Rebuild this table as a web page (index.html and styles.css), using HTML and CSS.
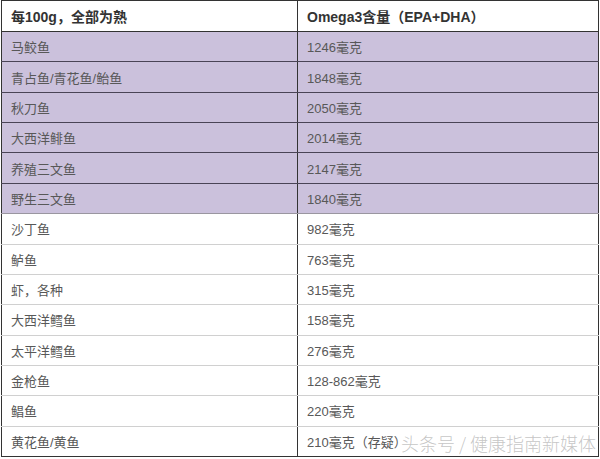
FILE: index.html
```html
<!DOCTYPE html>
<html lang="zh">
<head>
<meta charset="utf-8">
<link rel="stylesheet" href="styles.css">
</head>
<body>
<div class="wrap">
<table class="omega">
  <thead>
    <tr><th class="c1">每100g，全部为熟</th><th class="c2">Omega3含量（EPA+DHA）</th></tr>
  </thead>
  <tbody>
    <tr class="hl"><td>马鲛鱼</td><td>1246毫克</td></tr>
    <tr class="hl"><td>青占鱼/青花鱼/鲐鱼</td><td>1848毫克</td></tr>
    <tr class="hl"><td>秋刀鱼</td><td>2050毫克</td></tr>
    <tr class="hl"><td>大西洋鲱鱼</td><td>2014毫克</td></tr>
    <tr class="hl"><td>养殖三文鱼</td><td>2147毫克</td></tr>
    <tr class="hl last"><td>野生三文鱼</td><td>1840毫克</td></tr>
    <tr><td>沙丁鱼</td><td>982毫克</td></tr>
    <tr><td>鲈鱼</td><td>763毫克</td></tr>
    <tr><td>虾，各种</td><td>315毫克</td></tr>
    <tr><td>大西洋鳕鱼</td><td>158毫克</td></tr>
    <tr><td>太平洋鳕鱼</td><td>276毫克</td></tr>
    <tr><td>金枪鱼</td><td>128-862毫克</td></tr>
    <tr><td>鲳鱼</td><td>220毫克</td></tr>
    <tr class="end"><td>黄花鱼/黄鱼</td><td>210毫克（存疑）</td></tr>
  </tbody>
</table>
<div class="watermark">头条号 / 健康指南新媒体</div>
</div>
</body>
</html>
```

FILE: styles.css
```css
html, body {
  margin: 0;
  padding: 0;
  background: #ffffff;
}
.wrap {
  position: relative;
  width: 600px;
  height: 459px;
  overflow: hidden;
}
.omega {
  margin-left: 1px;
  width: 598px;
  border-collapse: collapse;
  font-family: "Liberation Sans", "Noto Sans CJK SC", sans-serif;
  font-size: 13px;
  color: #585858;
  table-layout: fixed;
}
.omega th, .omega td {
  text-align: left;
  padding: 0 0 0 9px;
  border-left: 1px solid #333333;
  border-right: 1px solid #333333;
  white-space: nowrap;
}
.omega .c1 { width: 286px; }
.omega th {
  height: 30px;
  font-size: 14px;
  font-weight: bold;
  color: #333333;
  border-top: 1px solid #333333;
  border-bottom: 1px solid #333333;
}
.omega td {
  height: 29.36px;
  border-bottom: 1px solid #d0d0d0;
}
.omega tr.hl td {
  background: #cbc1dc;
  border-bottom: 1px solid #4a4456;
}
.omega tr.hl.last td {
  border-bottom: 1px solid #9a96a0;
}
.omega tr.end td {
  border-bottom: 1px solid #333333;
}
.watermark {
  position: absolute;
  left: 401px;
  top: 430px;
  font-family: "Noto Sans CJK SC", sans-serif;
  font-weight: 300;
  font-size: 18px;
  color: rgba(160, 160, 160, 0.6);
  white-space: nowrap;
}
```
